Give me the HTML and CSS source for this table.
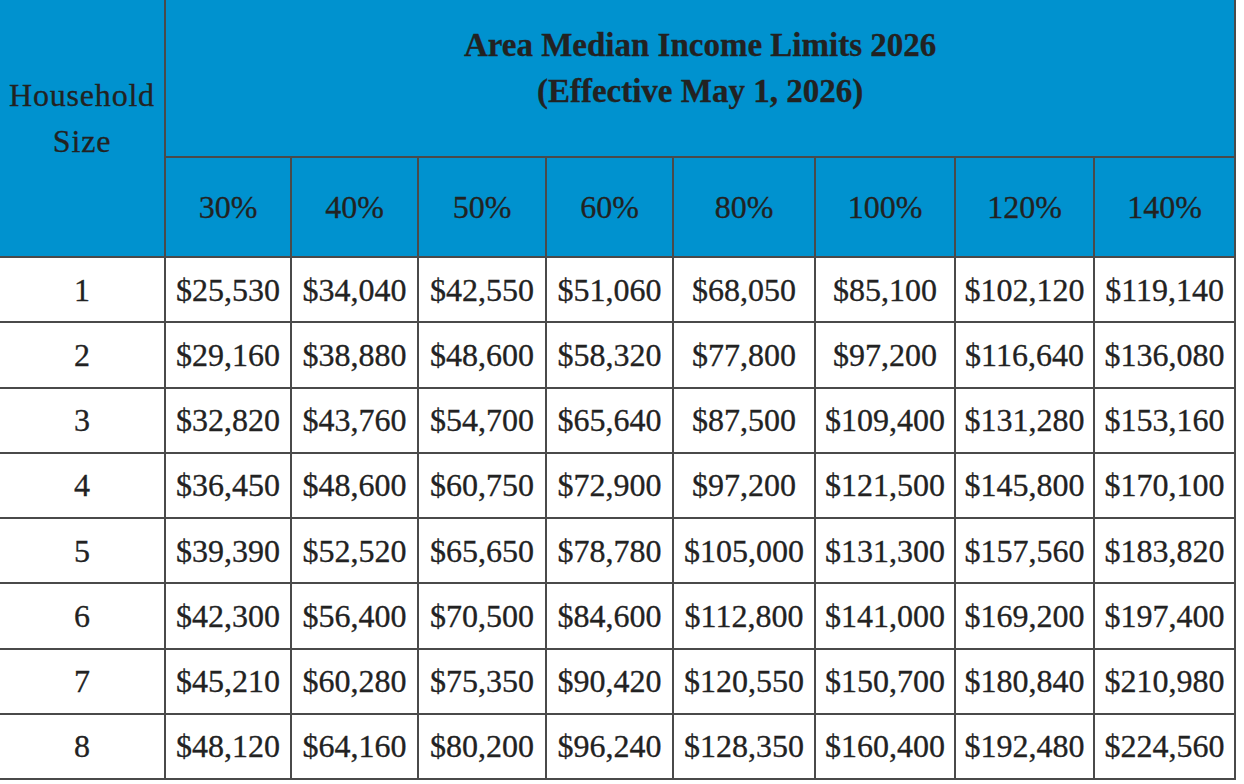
FILE: index.html
```html
<!DOCTYPE html>
<html lang="en">
<head>
<meta charset="utf-8">
<title>Area Median Income Limits 2026</title>
<link rel="stylesheet" href="styles.css">
</head>
<body>
<table class="ami">
  <colgroup>
    <col class="c-size">
    <col class="c-126">
    <col class="c-127">
    <col class="c-128">
    <col class="c-127">
    <col class="c-142">
    <col class="c-140">
    <col class="c-139">
    <col class="c-141">
  </colgroup>
  <thead>
    <tr class="r-title">
      <th rowspan="2" class="hh">Household<br>Size</th>
      <th colspan="8" class="title">Area Median Income Limits 2026<br>(Effective May 1, 2026)</th>
    </tr>
    <tr class="r-pct">
      <th>30%</th><th>40%</th><th>50%</th><th>60%</th><th>80%</th><th>100%</th><th>120%</th><th>140%</th>
    </tr>
  </thead>
  <tbody>
    <tr><td>1</td><td>$25,530</td><td>$34,040</td><td>$42,550</td><td>$51,060</td><td>$68,050</td><td>$85,100</td><td>$102,120</td><td>$119,140</td></tr>
    <tr><td>2</td><td>$29,160</td><td>$38,880</td><td>$48,600</td><td>$58,320</td><td>$77,800</td><td>$97,200</td><td>$116,640</td><td>$136,080</td></tr>
    <tr><td>3</td><td>$32,820</td><td>$43,760</td><td>$54,700</td><td>$65,640</td><td>$87,500</td><td>$109,400</td><td>$131,280</td><td>$153,160</td></tr>
    <tr><td>4</td><td>$36,450</td><td>$48,600</td><td>$60,750</td><td>$72,900</td><td>$97,200</td><td>$121,500</td><td>$145,800</td><td>$170,100</td></tr>
    <tr><td>5</td><td>$39,390</td><td>$52,520</td><td>$65,650</td><td>$78,780</td><td>$105,000</td><td>$131,300</td><td>$157,560</td><td>$183,820</td></tr>
    <tr><td>6</td><td>$42,300</td><td>$56,400</td><td>$70,500</td><td>$84,600</td><td>$112,800</td><td>$141,000</td><td>$169,200</td><td>$197,400</td></tr>
    <tr><td>7</td><td>$45,210</td><td>$60,280</td><td>$75,350</td><td>$90,420</td><td>$120,550</td><td>$150,700</td><td>$180,840</td><td>$210,980</td></tr>
    <tr><td>8</td><td>$48,120</td><td>$64,160</td><td>$80,200</td><td>$96,240</td><td>$128,350</td><td>$160,400</td><td>$192,480</td><td>$224,560</td></tr>
  </tbody>
</table>
</body>
</html>
```
FILE: styles.css
```css
html, body {
  margin: 0;
  padding: 0;
  background: #ffffff;
  overflow: hidden;
}

body {
  font-family: "Liberation Serif", "Times New Roman", serif;
  color: #222222;
}

.ami {
  border-collapse: collapse;
  table-layout: fixed;
  width: 1238px;
  margin: -23px 0 0 -2px;
}

.c-size { width: 166px; }
.c-126 { width: 126px; }
.c-127 { width: 127px; }
.c-128 { width: 128px; }
.c-142 { width: 142px; }
.c-140 { width: 140px; }
.c-139 { width: 139px; }
.c-141 { width: 141px; }

.ami th,
.ami td {
  border: 2px solid #4a4a4a;
  padding: 0;
  text-align: center;
  vertical-align: middle;
  white-space: nowrap;
  -webkit-text-stroke: 0.3px #222222;
}

.ami th {
  background: #0092cf;
  font-weight: normal;
  font-size: 32px;
  line-height: 46px;
}

.ami th.title {
  font-weight: bold;
  font-size: 33px;
}

.ami th.hh {
  letter-spacing: 0.8px;
}

.r-title { height: 179px; }
.r-pct { height: 100px; }

.ami td {
  font-size: 32px;
  line-height: 40px;
}

.ami tbody tr { height: 65.25px; }
```
